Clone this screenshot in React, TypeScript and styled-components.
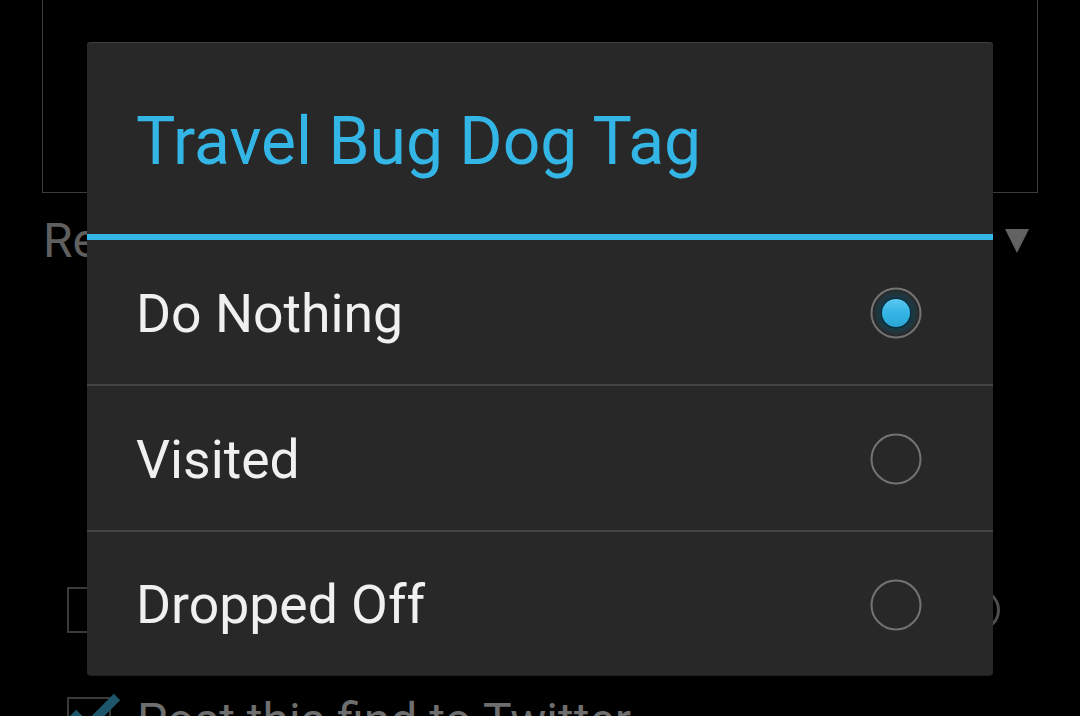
import React from "react";
import styled, { createGlobalStyle } from "styled-components";

const Global = createGlobalStyle`
  html, body { margin: 0; padding: 0; background: #000; overflow: hidden; }
  body { font-family: Roboto, "Noto Sans", sans-serif; }
`;

const Screen = styled.div`
  position: relative;
  width: 1080px;
  height: 716px;
  overflow: hidden;
  background: #000;
  display: flex;
  flex-direction: column;
`;

const NotesBox = styled.div`
  margin: 0 42px;
  height: 192px;
  border: 1px solid #3c3c3c;
  border-top: none;
  flex-shrink: 0;
`;

const SpinnerRow = styled.div`
  display: flex;
  align-items: center;
  justify-content: space-between;
  height: 94px;
  padding: 0 51px 0 43px;
  color: #5f5f5f;
  font-size: 48px;
  flex-shrink: 0;
`;

const Triangle = styled.div`
  width: 0;
  height: 0;
  border-left: 12px solid transparent;
  border-right: 12px solid transparent;
  border-top: 24px solid #626262;
  margin-top: 2px;
`;

const OptionRow = styled.div<{ $top: number }>`
  display: flex;
  align-items: center;
  gap: 26px;
  margin-top: ${(p) => p.$top}px;
  padding: 0 80px 0 67px;
  height: 48px;
  flex-shrink: 0;
  color: #6e6e6e;
  font-size: 48px;
  white-space: nowrap;
`;

const CheckBox = styled.div`
  width: 44px;
  height: 46px;
  border: 2px solid #3a3a3a;
  box-sizing: border-box;
  position: relative;
  flex-shrink: 0;
`;

const Spacer = styled.div`
  flex: 1;
`;

const Ring = styled.div`
  width: 42px;
  height: 42px;
  border-radius: 50%;
  border: 3px solid #4e4e4e;
  box-sizing: border-box;
`;

const Dialog = styled.div`
  position: absolute;
  left: 87px;
  top: 42px;
  width: 906px;
  height: 633px;
  background: #282828;
  border-radius: 4px;
  box-shadow: inset 0 1px 0 #3d3d3d, 0 1px 0 #1e1e1e;
  display: flex;
  flex-direction: column;
  overflow: hidden;
`;

const Title = styled.div`
  height: 192px;
  display: flex;
  align-items: center;
  padding: 6px 49px 0;
  box-sizing: border-box;
  color: #33b5e5;
  font-size: 66px;
  flex-shrink: 0;
`;

const TitleRule = styled.div`
  height: 6px;
  background: #33b5e5;
  flex-shrink: 0;
`;

const Item = styled.div<{ $h: number }>`
  height: ${(p) => p.$h}px;
  display: flex;
  align-items: center;
  justify-content: space-between;
  padding: 2px 71px 0 49px;
  box-sizing: border-box;
  color: #f0f0f0;
  font-size: 53.5px;
  flex-shrink: 0;
`;

const Divider = styled.div`
  height: 2px;
  background: #444444;
  flex-shrink: 0;
`;

const Radio = ({ checked }: { checked: boolean }) => (
  <svg width="52" height="52" viewBox="0 0 52 52">
    <defs>
      <radialGradient id="glow" cx="50%" cy="50%" r="50%">
        <stop offset="55%" stopColor="#0d3a4a" stopOpacity="1" />
        <stop offset="100%" stopColor="#1a4c5e" stopOpacity="0.2" />
      </radialGradient>
      <linearGradient id="dot" x1="0" y1="0" x2="0" y2="1">
        <stop offset="0%" stopColor="#5cc9f0" />
        <stop offset="45%" stopColor="#35b6e6" />
        <stop offset="100%" stopColor="#2aa7d8" />
      </linearGradient>
    </defs>
    {checked && <circle cx="26" cy="26" r="22" fill="url(#glow)" />}
    <circle cx="26" cy="26" r="24.5" fill="none" stroke="#737373" strokeWidth="2" />
    {checked && (
      <>
        <circle cx="26" cy="26" r="15.5" fill="#0b2f3c" />
        <circle cx="26" cy="26" r="14" fill="url(#dot)" />
      </>
    )}
  </svg>
);

const CheckMark = () => (
  <svg width="64" height="50" viewBox="0 0 64 50" style={{ position: "absolute", left: -2, top: -6 }}>
    <path d="M6 20 L20 34 L50 4" stroke="#1d566b" strokeWidth="9" fill="none" />
  </svg>
);

const items = [
  { label: "Do Nothing", checked: true, h: 144 },
  { label: "Visited", checked: false, h: 144 },
  { label: "Dropped Off", checked: false, h: 143 },
];

export default function App() {
  return (
    <>
      <Global />
      <Screen>
        <NotesBox />
        <SpinnerRow>
          <span>Re</span>
          <Triangle />
        </SpinnerRow>
        <OptionRow $top={299}>
          <CheckBox />
          <Spacer />
          <Ring />
        </OptionRow>
        <OptionRow $top={62}>
          <CheckBox>
            <CheckMark />
          </CheckBox>
          <span>Post this find to Twitter</span>
        </OptionRow>
        <Dialog>
          <Title>Travel Bug Dog Tag</Title>
          <TitleRule />
          {items.map((it, i) => (
            <React.Fragment key={it.label}>
              {i > 0 && <Divider />}
              <Item $h={it.h}>
                <span>{it.label}</span>
                <Radio checked={it.checked} />
              </Item>
            </React.Fragment>
          ))}
        </Dialog>
      </Screen>
    </>
  );
}
